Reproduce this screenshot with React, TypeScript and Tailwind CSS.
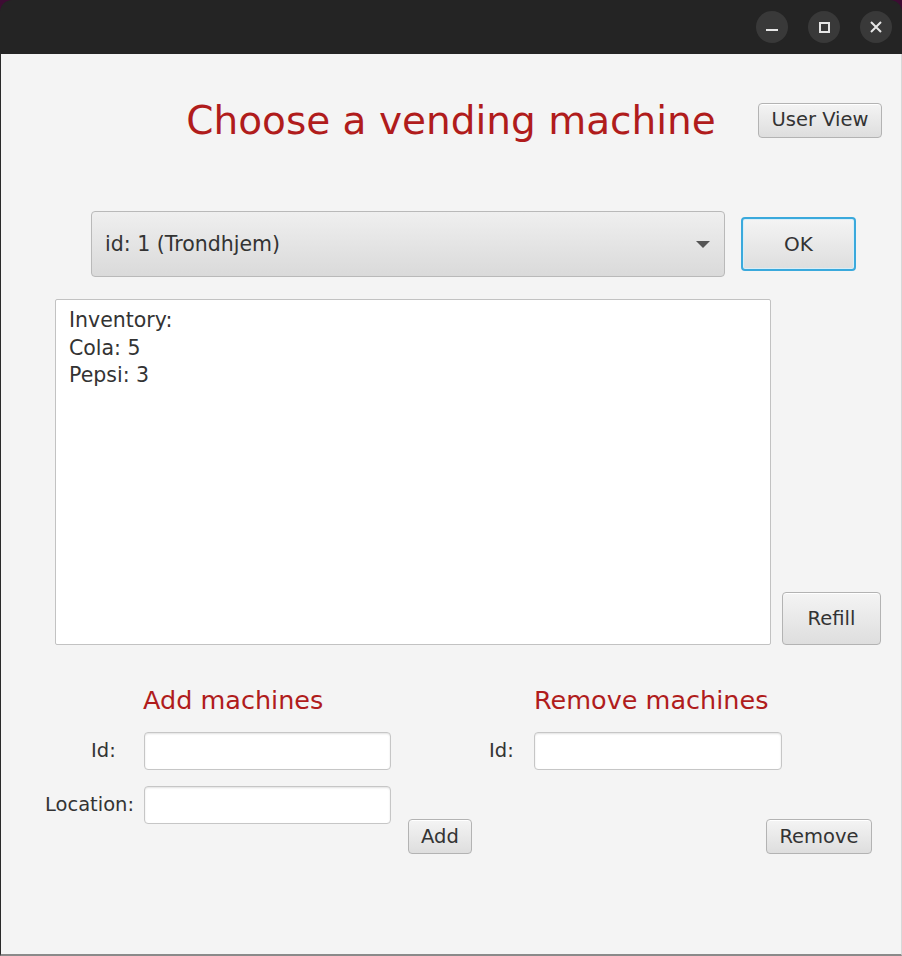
import React from 'react';

const font = { fontFamily: '"DejaVu Sans", "Liberation Sans", sans-serif' };

const btn =
  'flex items-center justify-center rounded-[4px] border border-[#b3b3b3] bg-gradient-to-b from-[#f4f4f4] to-[#dedede] text-[#333] text-[19.5px] shadow-[inset_0_1px_0_#fff]';

const field =
  'h-[38px] rounded-[4px] border border-[#c6c6c6] bg-white shadow-[inset_0_1px_2px_rgba(0,0,0,0.12)]';

const TitleBar: React.FC = () => (
  <div className="h-[54px] shrink-0 bg-[#242424] flex items-center justify-end gap-[20px] pr-[10px]">
    <div className="w-[32px] h-[32px] rounded-full bg-[#393939] flex items-center justify-center">
      <div className="w-[12px] h-[2px] bg-[#e6e6e6] mt-[6px]" />
    </div>
    <div className="w-[32px] h-[32px] rounded-full bg-[#393939] flex items-center justify-center">
      <div className="w-[11px] h-[11px] border-2 border-[#e6e6e6]" />
    </div>
    <div className="w-[32px] h-[32px] rounded-full bg-[#393939] flex items-center justify-center">
      <svg width="12" height="12" viewBox="0 0 12 12">
        <path d="M1 1 L11 11 M11 1 L1 11" stroke="#e6e6e6" strokeWidth="2" />
      </svg>
    </div>
  </div>
);

export default function App() {
  return (
    <div className="w-[902px] h-[956px] bg-[#3d0c33]" style={font}>
      <div className="h-full flex flex-col rounded-t-[12px] overflow-hidden">
        <TitleBar />
        <div className="flex-1 bg-[#f4f4f4] border-l border-[#2a2a2a] border-r border-r-[#d8d8d8] border-b-2 border-b-[#8a8a8a] text-[#333]">
          {/* header */}
          <div className="grid grid-cols-[1fr_auto_1fr] items-center h-[35px] mt-[46px]">
            <div />
            <div className="text-[39px] leading-none text-[#b01c1c] pt-[1px]">Choose a vending machine</div>
            <div className="flex justify-end pr-[19px]">
              <button className={`${btn} w-[124px] h-[35px] text-[18px]`}>User View</button>
            </div>
          </div>

          {/* machine picker */}
          <div className="flex items-center gap-[16px] mt-[76px] pl-[90px]">
            <div className="w-[634px] h-[66px] rounded-[4px] border border-[#b9b9b9] bg-gradient-to-b from-[#efefef] to-[#dadada] flex items-center justify-between pl-[13px] pr-[14px] text-[20.5px]">
              <span>id: 1 (Trondhjem)</span>
              <svg width="14" height="7" viewBox="0 0 14 7">
                <path d="M0 0 H14 L7 7 Z" fill="#555" />
              </svg>
            </div>
            <button className="w-[115px] h-[54px] rounded-[4px] border-2 border-[#3aa9dc] bg-gradient-to-b from-[#f4f4f4] to-[#dedede] text-[20px] text-[#333] shadow-[inset_0_0_0_1px_#d8eef8]">
              OK
            </button>
          </div>

          {/* inventory */}
          <div className="flex items-end gap-[11px] mt-[22px] pl-[54px]">
            <div className="w-[716px] h-[346px] bg-white border border-[#c2c2c2] rounded-[2px] px-[13px] pt-[7px] text-[20.5px] leading-[27.5px]">
              <div>Inventory:</div>
              <div>Cola: 5</div>
              <div>Pepsi: 3</div>
            </div>
            <button className={`${btn} w-[99px] h-[53px]`}>Refill</button>
          </div>

          {/* add / remove */}
          <div className="flex mt-[40px] pl-[44px]">
            <div className="w-[428px]">
              <div className="pl-[98px] h-[30px] text-[25.5px] leading-[30px] text-[#b01c1c]">Add machines</div>
              <div className="flex items-center mt-[17px] text-[19.5px]">
                <div className="w-[99px] pl-[46px]">Id:</div>
                <div className={`${field} w-[247px]`} />
              </div>
              <div className="flex items-start mt-[16px] text-[19.5px]">
                <div className="w-[99px] h-[38px] flex items-center">Location:</div>
                <div className={`${field} w-[247px]`} />
                <button className={`${btn} w-[64px] h-[35px] ml-[17px] mt-[33px]`}>Add</button>
              </div>
            </div>
            <div className="w-[384px] ml-[16px]">
              <div className="pl-[45px] h-[30px] text-[25.5px] leading-[30px] text-[#b01c1c]">Remove machines</div>
              <div className="flex items-center mt-[17px] text-[19.5px]">
                <div className="w-[45px]">Id:</div>
                <div className={`${field} w-[248px]`} />
              </div>
              <div className="flex justify-end pr-[1px] mt-[49px]">
                <button className={`${btn} w-[106px] h-[35px]`}>Remove</button>
              </div>
            </div>
          </div>
        </div>
      </div>
    </div>
  );
}
